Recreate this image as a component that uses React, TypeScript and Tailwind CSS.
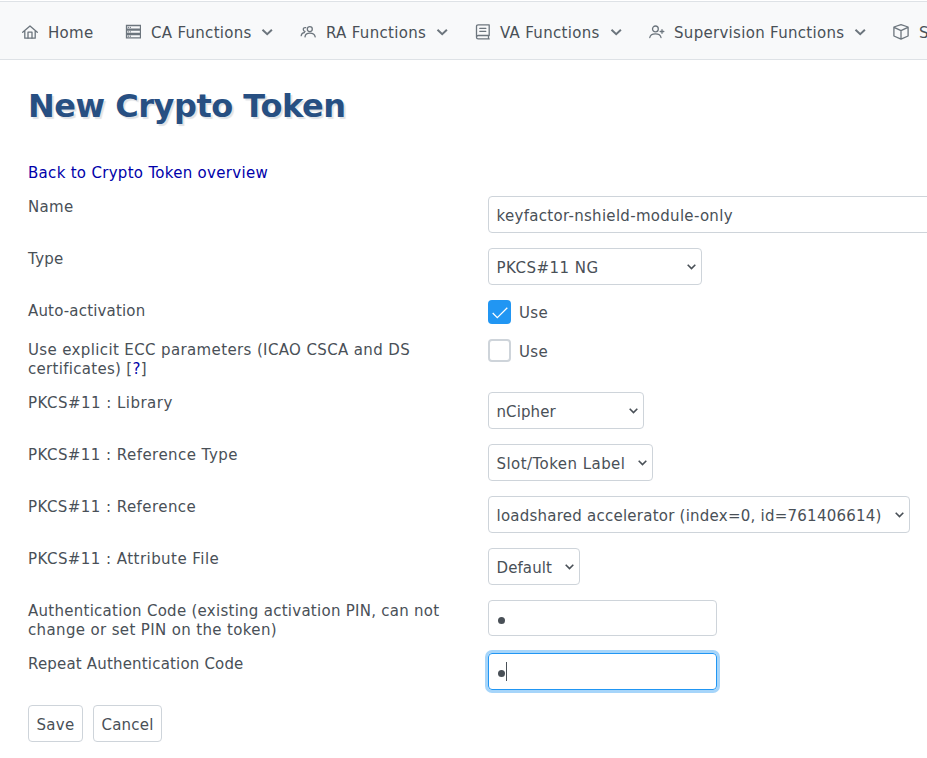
import React, { useState } from 'react';

type IconProps = { children: React.ReactNode };

const NavIcon = ({ children }: IconProps) => (
  <svg viewBox="0 0 16 16" className="mb-0.5 h-4 w-4 shrink-0" fill="none" stroke="#6c757d" strokeWidth="1.3" strokeLinecap="round" strokeLinejoin="round">
    {children}
  </svg>
);

const HomeIcon = () => (
  <NavIcon>
    <path d="M.7 8.3 8 1.9l7.3 6.4M2.8 6.9v7.3h10.4V6.9" />
    <path d="M6 14V8.2h4V14" />
  </NavIcon>
);

const ServerIcon = () => (
  <NavIcon>
    <path d="M1.5 1.5h14v3.6h-14zM1.5 6.1h14v3.4h-14zM1.5 10.5h14v3.4h-14z" strokeLinejoin="miter" />
    <path d="M3.3 3.3h.1M5.3 3.3h.1M3.3 7.8h.1M5.3 7.8h.1M3.3 12.2h.1M5.3 12.2h.1" />
  </NavIcon>
);

const UsersIcon = () => (
  <NavIcon>
    <circle cx="9.8" cy="5.1" r="2.5" />
    <path d="M5 12.8c.3-2.5 2.2-3.6 4.9-3.6s4.7 1.1 5.3 3.6" />
    <path d="M5.7 3.7C4.1 3.3 3.1 4.4 3.3 5.8c.1.9.8 1.6 1.7 1.7M1.2 11.7c.2-1.8 1.3-2.9 3.2-3.1" />
  </NavIcon>
);

const BookIcon = () => (
  <NavIcon>
    <path d="M14.2 11.5V.8H3.2C2 .8 1.5 1.3 1.5 2.4v10.8c0 1.1.6 1.7 1.7 1.7h11M1.6 13c0-1 .6-1.5 1.6-1.5h11M13.5 11.7v3" />
    <path d="M4.8 4.4h6M4.8 7.3h6" />
  </NavIcon>
);

const UserPlusIcon = () => (
  <NavIcon>
    <circle cx="6.4" cy="4.9" r="2.9" />
    <path d="M.8 13.5c.4-2.6 2.2-3.7 5.6-3.7s5.2 1.1 5.6 3.7M13 5.7v3.6M11.2 7.5h3.6" />
  </NavIcon>
);

const BoxIcon = () => (
  <NavIcon>
    <path d="M8 .7 15.1 3v9L8 15.2.9 12V3zM1.1 3.3 8 6.6l6.9-3.3M8 6.6v8.4" />
  </NavIcon>
);

const navItems = [
  { label: 'Home', icon: <HomeIcon />, width: 'ml-[10px] w-[77px]' },
  { label: 'CA Functions', icon: <ServerIcon />, width: 'ml-[10px] w-[110px]', menu: true },
  { label: 'RA Functions', icon: <UsersIcon />, width: 'ml-[10px] w-[110px]', menu: true },
  { label: 'VA Functions', icon: <BookIcon />, width: 'ml-[9px] w-[110px]', menu: true },
  { label: 'Supervision Functions', icon: <UserPlusIcon />, width: 'ml-[9px] w-[180px]', menu: true },
  { label: 'System Functions', icon: <BoxIcon />, width: 'ml-[10px] w-[150px]' },
];

const NavBar = () => (
  <nav className="mt-px flex h-[59px] items-center overflow-hidden border-y border-[#dee2e6] bg-[#f8f9fa] pl-[22px] pt-[5px]">
    {navItems.map((item) => (
      <a key={item.label} href="#" className="flex shrink-0 items-center">
        {item.icon}
        <span className={`whitespace-nowrap ${item.width}`}>{item.label}</span>
        {item.menu && (
          <svg viewBox="0 0 12 8" className="mb-[3px] mr-[27px] h-2 w-3 shrink-0" fill="none" stroke="#6c757d" strokeWidth="2">
            <path d="m1.5 1.8 4.7 4.4 4.7-4.4" />
          </svg>
        )}
      </a>
    ))}
  </nav>
);

type RowProps = { label: React.ReactNode; height: string; tracking?: string; children: React.ReactNode };

const Row = ({ label, height, tracking = '', children }: RowProps) => (
  <div className={`flex items-start ${height}`}>
    <div className={`w-[460px] shrink-0 pt-0.5 leading-[19px] ${tracking}`}>{label}</div>
    {children}
  </div>
);

const SelectBox = ({ value, width, tracking = '' }: { value: string; width: string; tracking?: string }) => (
  <button type="button" className={`flex h-[37px] items-center justify-between rounded-[4px] border border-[#ced4da] bg-white pl-[7.5px] pr-[5px] pt-1 ${width}`}>
    <span className={`whitespace-nowrap ${tracking}`}>{value}</span>
    <svg viewBox="0 0 9 6" className="mb-[3px] h-[6px] w-[9px] shrink-0" fill="none" stroke="#495057" strokeWidth="1.6">
      <path d="m.7.8 3.8 3.8L8.3.8" />
    </svg>
  </button>
);

const Checkbox = ({ initial }: { initial: boolean }) => {
  const [checked, setChecked] = useState(initial);

  return (
    <button type="button" onClick={() => setChecked(!checked)} className="flex items-center">
      {checked ? (
        <span className="flex h-6 w-[23px] items-center justify-center rounded-[4px] bg-[#2196f3]">
          <svg viewBox="0 0 16 12" className="mt-0.5 h-3 w-4" fill="none" stroke="#ffffff" strokeWidth="1.3">
            <path d="m.7 6 4.6 4.6L15.3.8" />
          </svg>
        </span>
      ) : (
        <span className="h-[23px] w-[23px] rounded-[4px] border-2 border-[#ced4da] bg-white" />
      )}
      <span className="ml-2 pt-[3px]">Use</span>
    </button>
  );
};

const App = () => {
  return (
    <div className="h-[758px] w-full overflow-hidden bg-white font-['DejaVu_Sans',sans-serif] text-[15px] leading-[19px] tracking-[0.3px] text-[#495057]">
      <NavBar />

      <main className="pl-7">
        <h1 className="pt-[26px] text-[32px] leading-[40px] font-bold tracking-[-0.48px] text-[#274f82] [text-shadow:2px_2px_1px_#dfe2e6]">
          New Crypto Token
        </h1>
        <a href="#" className="mt-[38px] block w-fit text-[#0000aa]">Back to Crypto Token overview</a>

        <div className="mt-[13px]">
          <Row label="Name" height="h-[52px]">
            <div className="flex h-[37px] w-[600px] shrink-0 items-center rounded-[4px] border border-[#ced4da] pl-[7.5px] pt-1">
              keyfactor-nshield-module-only
            </div>
          </Row>
          <Row label="Type" height="h-[52px]">
            <SelectBox value="PKCS#11 NG" width="w-[214px]" tracking="tracking-[0.47px]" />
          </Row>
          <Row label="Auto-activation" height="h-[39px]" tracking="tracking-[0.17px]">
            <Checkbox initial={true} />
          </Row>
          <Row
            label={
              <>
                <span className="tracking-[0.37px]">Use explicit ECC parameters (ICAO CSCA and DS</span><br />
                certificates) [<a href="#" className="text-[#0000aa]">?</a>]
              </>
            }
            height="h-[53px]"
          >
            <Checkbox initial={false} />
          </Row>
          <Row label="PKCS#11 : Library" height="h-[52px]" tracking="tracking-[0.47px]">
            <SelectBox value="nCipher" width="w-[156px]" tracking="tracking-[0.1px]" />
          </Row>
          <Row label="PKCS#11 : Reference Type" height="h-[52px]" tracking="tracking-[0.45px]">
            <SelectBox value="Slot/Token Label" width="w-[165px]" tracking="tracking-[0.45px]" />
          </Row>
          <Row label="PKCS#11 : Reference" height="h-[52px]" tracking="tracking-[0.44px]">
            <SelectBox value="loadshared accelerator (index=0, id=761406614)" width="w-[422px]" tracking="tracking-[0.24px]" />
          </Row>
          <Row label="PKCS#11 : Attribute File" height="h-[52px]" tracking="tracking-[0.45px]">
            <SelectBox value="Default" width="w-[92px]" tracking="tracking-[0.1px]" />
          </Row>
          <Row
            label={
              <>
                <span className="tracking-[0.27px]">Authentication Code (existing activation PIN, can not</span><br />
                <span className="tracking-[0.36px]">change or set PIN on the token)</span>
              </>
            }
            height="h-[53px]"
          >
            <div className="flex h-9 w-[229px] items-center rounded-[4px] border border-[#ced4da] pl-[8.5px] pt-[5px]">
              <span className="h-[7px] w-[7px] rounded-full bg-[#495057]" />
            </div>
          </Row>
          <Row label="Repeat Authentication Code" height="h-[52px]" tracking="tracking-[0.18px]">
            <div className="flex h-[37px] w-[229px] items-center rounded-[4px] border border-[#2196f3] pl-[8.5px] shadow-[0_0_0_3px_#a6d5fa]">
              <span className="mt-1 h-[7px] w-[7px] rounded-full bg-[#495057]" />
              <span className="ml-[1.5px] h-[19px] w-px bg-[#495057]" />
            </div>
          </Row>
        </div>

        <div className="flex gap-[10px]">
          <button type="button" className="h-[37px] w-[55px] rounded-[4px] border border-[#ced4da] pt-1">Save</button>
          <button type="button" className="h-[37px] w-[69px] rounded-[4px] border border-[#ced4da] pt-1 tracking-[0.2px]">Cancel</button>
        </div>
      </main>
    </div>
  );
};

export default App;
